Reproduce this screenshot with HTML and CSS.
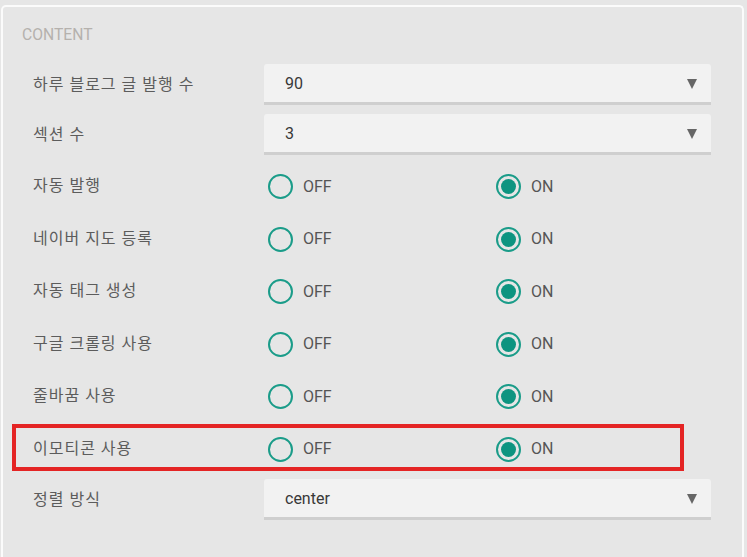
FILE: index.html
```html
<!DOCTYPE html>
<html lang="ko">
<head>
<meta charset="utf-8">
<title>Content settings</title>
<link rel="stylesheet" href="styles.css">
</head>
<body>
<div class="panel">
  <div class="panel-title">CONTENT</div>
  <div class="rows">
    <div class="row row-select">
      <div class="label">하루 블로그 글 발행 수</div>
      <div class="select"><span class="value">90</span><span class="arrow"></span></div>
    </div>
    <div class="row row-select">
      <div class="label">섹션 수</div>
      <div class="select"><span class="value">3</span><span class="arrow"></span></div>
    </div>
    <div class="row row-radio">
      <div class="label">자동 발행</div>
      <div class="radios">
        <div class="opt"><span class="radio"></span><span class="opt-text">OFF</span></div>
        <div class="opt"><span class="radio checked"></span><span class="opt-text">ON</span></div>
      </div>
    </div>
    <div class="row row-radio">
      <div class="label">네이버 지도 등록</div>
      <div class="radios">
        <div class="opt"><span class="radio"></span><span class="opt-text">OFF</span></div>
        <div class="opt"><span class="radio checked"></span><span class="opt-text">ON</span></div>
      </div>
    </div>
    <div class="row row-radio">
      <div class="label">자동 태그 생성</div>
      <div class="radios">
        <div class="opt"><span class="radio"></span><span class="opt-text">OFF</span></div>
        <div class="opt"><span class="radio checked"></span><span class="opt-text">ON</span></div>
      </div>
    </div>
    <div class="row row-radio">
      <div class="label">구글 크롤링 사용</div>
      <div class="radios">
        <div class="opt"><span class="radio"></span><span class="opt-text">OFF</span></div>
        <div class="opt"><span class="radio checked"></span><span class="opt-text">ON</span></div>
      </div>
    </div>
    <div class="row row-radio">
      <div class="label">줄바꿈 사용</div>
      <div class="radios">
        <div class="opt"><span class="radio"></span><span class="opt-text">OFF</span></div>
        <div class="opt"><span class="radio checked"></span><span class="opt-text">ON</span></div>
      </div>
    </div>
    <div class="row row-radio highlight">
      <div class="label">이모티콘 사용</div>
      <div class="radios">
        <div class="opt"><span class="radio"></span><span class="opt-text">OFF</span></div>
        <div class="opt"><span class="radio checked"></span><span class="opt-text">ON</span></div>
      </div>
    </div>
    <div class="row row-select row-last">
      <div class="label">정렬 방식</div>
      <div class="select"><span class="value">center</span><span class="arrow"></span></div>
    </div>
  </div>
</div>
</body>
</html>
```

FILE: styles.css
```css
html, body {
  margin: 0;
  padding: 0;
  height: 100%;
  overflow: hidden;
  background: #e6e6e6;
  font-family: Roboto, "Noto Sans CJK KR", sans-serif;
}

.panel {
  margin: 5px 3px 0 1px;
  border: 2px solid #fbfbfb;
  border-bottom: none;
  border-radius: 5px 5px 0 0;
  background: #e6e6e6;
  height: 620px;
  box-sizing: border-box;
  padding: 18px 31px 0 0;
}

.panel-title {
  padding-left: 19px;
  font-size: 15.7px;
  line-height: 20px;
  color: #b5b1ad;
  margin-bottom: 19px;
}

.rows {
  padding-left: 30px;
}

.row {
  display: grid;
  grid-template-columns: 231px 447px;
  align-items: center;
}

.label {
  font-size: 16px;
  color: #5c5c5c;
  line-height: 20px;
  letter-spacing: 1px;
}

.row-select {
  height: 41px;
  margin-bottom: 9px;
}

.row-radio {
  height: 52.5px;
}

.row-select + .row-radio {
  margin-top: -4px;
}

.row-last {
  margin-top: 4px;
}

.select {
  height: 41px;
  box-sizing: border-box;
  background: #f2f2f2;
  border-bottom: 3px solid #cfcfcf;
  border-radius: 3px 3px 0 0;
  display: flex;
  align-items: center;
  justify-content: space-between;
  padding: 1px 14px 0 21px;
}

.value {
  font-size: 16px;
  color: #383838;
  line-height: 20px;
}

.arrow {
  width: 0;
  height: 0;
  border-left: 5.5px solid transparent;
  border-right: 5.5px solid transparent;
  border-top: 10px solid #666666;
  margin-top: 1px;
}

.radios {
  display: grid;
  grid-template-columns: 228px 219px;
  padding-left: 4px;
  padding-top: 1px;
}

.opt {
  display: flex;
  align-items: center;
}

.radio {
  width: 25px;
  height: 25px;
  box-sizing: border-box;
  border: 2px solid #1a9c89;
  border-radius: 50%;
  display: flex;
  align-items: center;
  justify-content: center;
  margin-right: 10px;
}

.radio.checked::before {
  content: "";
  width: 15px;
  height: 15px;
  border-radius: 50%;
  background: #0d9480;
}

.opt-text {
  font-size: 16px;
  color: #555555;
  line-height: 20px;
}

.highlight {
  position: relative;
}

.highlight::after {
  content: "";
  position: absolute;
  top: 1.5px;
  bottom: 4px;
  left: -21px;
  right: 27px;
  border: 4px solid #e42424;
  pointer-events: none;
}
```
